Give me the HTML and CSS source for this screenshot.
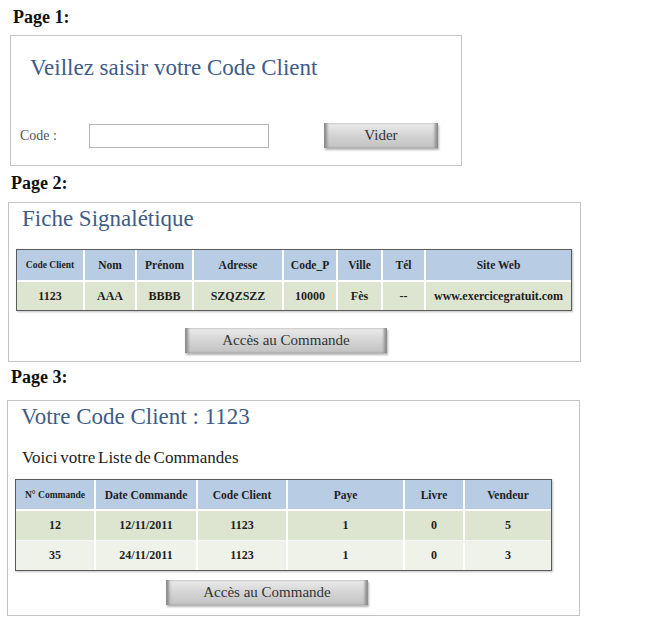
FILE: index.html
```
<!DOCTYPE html>
<html lang="fr">
<head>
    <meta charset="UTF-8">
    <meta name="viewport" content="width=device-width, initial-scale=1.0">
    <title>Code Client - Pages</title>
    <link rel="stylesheet" href="styles.css">
</head>
<body>

<div class="page-label label-1">Page 1:</div>
<div class="card card-1">
    <h2 class="card-title title-1">Veillez saisir votre Code Client</h2>
    <div class="code-row">
        <label for="code-client">Code :</label>
        <input type="text" id="code-client">
        <button class="btn btn-vider">Vider</button>
    </div>
</div>

<div class="page-label label-2">Page 2:</div>
<div class="card card-2">
    <h2 class="card-title">Fiche Signalétique</h2>
    <table class="grid grid-fiche">
        <tr>
            <th class="small" style="width:66px">Code Client</th>
            <th style="width:50px">Nom</th>
            <th style="width:55px">Prénom</th>
            <th style="width:88px">Adresse</th>
            <th style="width:52px">Code_P</th>
            <th style="width:43px">Ville</th>
            <th style="width:41px">Tél</th>
            <th>Site Web</th>
        </tr>
        <tr class="row-a">
            <td>1123</td>
            <td>AAA</td>
            <td>BBBB</td>
            <td>SZQZSZZ</td>
            <td>10000</td>
            <td>Fès</td>
            <td>--</td>
            <td>www.exercicegratuit.com</td>
        </tr>
    </table>
    <button class="btn btn-acces acces-2">Accès au Commande</button>
</div>

<div class="page-label label-3">Page 3:</div>
<div class="card card-3">
    <h2 class="card-title">Votre Code Client : 1123</h2>
    <p class="subtitle">Voici votre Liste de Commandes</p>
    <table class="grid grid-commandes">
        <tr>
            <th class="small" style="width:78px">N° Commande</th>
            <th style="width:100px">Date Commande</th>
            <th style="width:88px">Code Client</th>
            <th style="width:115px">Paye</th>
            <th style="width:58px">Livre</th>
            <th>Vendeur</th>
        </tr>
        <tr class="row-a">
            <td>12</td>
            <td>12/11/2011</td>
            <td>1123</td>
            <td>1</td>
            <td>0</td>
            <td>5</td>
        </tr>
        <tr class="row-b">
            <td>35</td>
            <td>24/11/2011</td>
            <td>1123</td>
            <td>1</td>
            <td>0</td>
            <td>3</td>
        </tr>
    </table>
    <button class="btn btn-acces acces-3">Accès au Commande</button>
</div>

</body>
</html>
```

FILE: styles.css
```
body {
    margin: 0;
    font-family: "Liberation Serif", "Times New Roman", serif;
    background-color: #fff;
    color: #222;
}
.page-label {
    font-weight: bold;
    font-size: 18px;
    line-height: 20px;
    color: #111;
}
.label-1 {
    margin: 7px 0 0 13px;
}
.label-2 {
    margin: 7px 0 0 11px;
}
.label-3 {
    margin: 5px 0 0 11px;
}
.card {
    border: 1px solid #c4c4c4;
    background-color: #fff;
    box-sizing: border-box;
}
.card-1 {
    width: 452px;
    height: 131px;
    margin: 8px 0 0 10px;
}
.card-2 {
    width: 573px;
    height: 160px;
    margin: 9px 0 0 8px;
}
.card-3 {
    width: 573px;
    height: 216px;
    margin: 13px 0 0 7px;
}
.card-title {
    margin: 3px 0 0 13px;
    font-size: 23px;
    line-height: 26px;
    font-weight: normal;
    color: #3d5d88;
}
.title-1 {
    margin: 19px 0 0 19px;
}
.code-row {
    display: flex;
    align-items: center;
    margin-top: 42px;
    padding-left: 9px;
}
.code-row label {
    width: 69px;
    font-size: 14px;
    color: #555;
}
.code-row input {
    width: 180px;
    height: 24px;
    box-sizing: border-box;
    border: 1px solid #b4b4b4;
    margin: 0;
}
.btn {
    display: block;
    height: 25px;
    padding: 0;
    border: none;
    font-family: "Liberation Serif", "Times New Roman", serif;
    font-size: 15px;
    color: #333;
    background: linear-gradient(to bottom, #ececec 0%, #d6d6d6 45%, #c2c2c2 100%);
    box-shadow: inset 4px 0 3px -1px #8c8c8c, inset -4px 0 3px -1px #8c8c8c, 1px 2px 2px rgba(0, 0, 0, 0.3);
}
.btn-vider {
    width: 114px;
    margin-left: 55px;
}
.btn-acces {
    width: 202px;
}
.acces-2 {
    margin: 17px 0 0 176px;
}
.acces-3 {
    margin: 9px 0 0 158px;
}
.subtitle {
    margin: 18px 0 0 14px;
    font-size: 17px;
    line-height: 20px;
    word-spacing: -1.5px;
    color: #222;
}
.grid {
    border-collapse: separate;
    border-spacing: 0;
    border: 1px solid #5a5a5a;
    box-shadow: 1px 1px 2px rgba(0, 0, 0, 0.25);
    font-weight: bold;
    color: #1e1e1e;
    text-align: center;
    table-layout: fixed;
}
.grid-fiche {
    width: 556px;
    margin: 17px 0 0 7px;
}
.grid-commandes {
    width: 537px;
    margin: 11px 0 0 7px;
}
.grid th,
.grid td {
    padding: 0;
    border-right: 2px solid #fff;
    white-space: nowrap;
}
.grid th:last-child,
.grid td:last-child {
    border-right: none;
}
.grid th {
    background-color: #b8cce4;
    font-size: 11.5px;
    border-bottom: 2px solid #fff;
}
.grid th.small {
    font-size: 9.5px;
}
.grid td {
    font-size: 12px;
}
.grid-fiche th {
    height: 30px;
}
.grid-fiche td {
    height: 28px;
}
.grid-commandes th {
    height: 29px;
}
.grid-commandes td {
    height: 29px;
}
.row-a td {
    background-color: #dde5d0;
}
.row-b td {
    background-color: #eef2e8;
}
.grid-commandes .row-a td {
    border-bottom: 1px solid #f6f6f6;
}
```
